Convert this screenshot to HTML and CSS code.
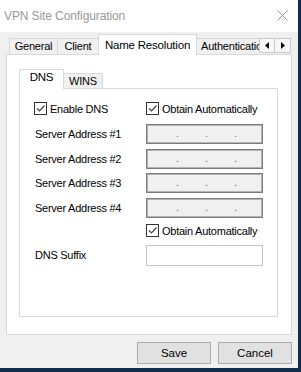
FILE: index.html
```html
<!DOCTYPE html>
<html lang="en">
<head>
    <meta charset="UTF-8">
    <meta name="viewport" content="width=device-width, initial-scale=1.0">
    <title>VPN Site Configuration</title>
    <link rel="stylesheet" href="styles.css">
</head>
<body>
    <div class="window">
        <div class="titlebar">
            <span class="title">VPN Site Configuration</span>
            <svg class="close" width="11" height="11" viewBox="0 0 11 11">
                <path d="M0.5 0.5 L10.5 10.5 M10.5 0.5 L0.5 10.5" stroke="#8f8f8f" stroke-width="1" fill="none"/>
            </svg>
        </div>

        <div class="tabstrip">
            <div class="tabs">
                <div class="tab tab-general">General</div>
                <div class="tab tab-client">Client</div>
                <div class="tab tab-names active">Name Resolution</div>
                <div class="tab tab-auth">Authentication</div>
            </div>
            <div class="tab-scroll">
                <span class="scroll-btn">
                    <svg width="4" height="7" viewBox="0 0 4 7"><path d="M4 0 L0 3.5 L4 7 Z" fill="#000"/></svg>
                </span>
                <span class="scroll-btn">
                    <svg width="4" height="7" viewBox="0 0 4 7"><path d="M0 0 L4 3.5 L0 7 Z" fill="#000"/></svg>
                </span>
            </div>
        </div>

        <div class="panel">
            <div class="subtabs">
                <div class="subtab subtab-dns active">DNS</div>
                <div class="subtab subtab-wins">WINS</div>
            </div>
            <div class="subpanel">
                <div class="form">
                    <div class="row">
                        <label class="check label-col"><span class="box"><svg width="11" height="11" viewBox="0 0 11 11"><path d="M2 5.5 L4.5 8 L9.5 2.5" stroke="#444" stroke-width="1.2" fill="none"/></svg></span>Enable DNS</label>
                        <label class="check"><span class="box"><svg width="11" height="11" viewBox="0 0 11 11"><path d="M2 5.5 L4.5 8 L9.5 2.5" stroke="#444" stroke-width="1.2" fill="none"/></svg></span>Obtain Automatically</label>
                    </div>
                    <div class="row row-ip first-ip">
                        <span class="label-col">Server Address #1</span>
                        <div class="ip"><span>.</span><span>.</span><span>.</span></div>
                    </div>
                    <div class="row row-ip">
                        <span class="label-col">Server Address #2</span>
                        <div class="ip"><span>.</span><span>.</span><span>.</span></div>
                    </div>
                    <div class="row row-ip">
                        <span class="label-col">Server Address #3</span>
                        <div class="ip"><span>.</span><span>.</span><span>.</span></div>
                    </div>
                    <div class="row row-ip">
                        <span class="label-col">Server Address #4</span>
                        <div class="ip"><span>.</span><span>.</span><span>.</span></div>
                    </div>
                    <div class="row row-check2">
                        <span class="label-col"></span>
                        <label class="check"><span class="box"><svg width="11" height="11" viewBox="0 0 11 11"><path d="M2 5.5 L4.5 8 L9.5 2.5" stroke="#444" stroke-width="1.2" fill="none"/></svg></span>Obtain Automatically</label>
                    </div>
                    <div class="row row-suffix">
                        <span class="label-col">DNS Suffix</span>
                        <div class="textbox"></div>
                    </div>
                </div>
            </div>
        </div>

        <div class="buttons">
            <button class="btn">Save</button>
            <button class="btn">Cancel</button>
        </div>
    </div>
</body>
</html>
```

FILE: styles.css
```css
body {
    margin: 0;
    background: #0f2c4c;
    font-family: "Liberation Sans", Arial, sans-serif;
    font-size: 11px;
    color: #000;
    height: 372px;
    overflow: hidden;
}
.window {
    width: 298px;
    height: 368px;
    background: #f0f0f0;
    display: flex;
    flex-direction: column;
}
.titlebar {
    height: 31px;
    background: #fff;
    display: flex;
    align-items: center;
    justify-content: space-between;
    padding: 0 10px 1px 4px;
}
.title {
    font-size: 12px;
    color: #999;
    letter-spacing: -0.1px;
}
.close {
    display: block;
}

/* outer tab strip */
.tabstrip {
    height: 23px;
    margin-bottom: -1px;
    position: relative;
    z-index: 1;
    display: flex;
    align-items: flex-end;
    padding: 0 7px 0 9px;
}
.tabs {
    flex: 1;
    min-width: 0;
    height: 23px;
    display: flex;
    align-items: flex-end;
    overflow: hidden;
}
.tab {
    flex: none;
    box-sizing: border-box;
    height: 16px;
    margin-bottom: 1px;
    margin-left: -1px;
    border: 1px solid #d9d9d9;
    border-bottom: none;
    background: #f0f0f0;
    text-align: center;
    line-height: 13px;
    padding-top: 1px;
    letter-spacing: -0.2px;
    white-space: nowrap;
}
.tab:first-child {
    margin-left: 0;
}
.tab.active {
    height: 21px;
    margin-bottom: 0;
    background: #fff;
    padding-top: 4px;
    font-size: 11.5px;
}
.tab-general { width: 49px; }
.tab-client { width: 42px; }
.tab-names { width: 99px; }
.tab-auth { width: 90px; text-align: left; padding-left: 4px; }
.tab-scroll {
    display: flex;
    margin-bottom: 2px;
}
.scroll-btn {
    box-sizing: border-box;
    width: 16px;
    height: 15px;
    border: 1px solid #c9c9c9;
    background: #f7f7f7;
    display: flex;
    align-items: center;
    justify-content: center;
}
.scroll-btn + .scroll-btn {
    border-left: none;
    width: 16px;
}

/* tab page */
.panel {
    box-sizing: border-box;
    width: 286px;
    height: 281px;
    margin-left: 6px;
    border: 1px solid #d9d9d9;
    background: #fff;
}
.subtabs {
    height: 34px;
    margin-bottom: -1px;
    position: relative;
    z-index: 1;
    display: flex;
    align-items: flex-end;
    padding-left: 12px;
}
.subtab {
    box-sizing: border-box;
    border: 1px solid #d9d9d9;
    border-bottom: none;
    text-align: center;
    letter-spacing: -0.2px;
}
.subtab-dns {
    width: 45px;
    height: 20px;
    background: #fff;
    line-height: 13px;
    padding-top: 1px;
    font-size: 11.5px;
}
.subtab-wins {
    width: 40px;
    height: 15px;
    margin-left: -1px;
    margin-bottom: 1px;
    background: #f0f0f0;
    line-height: 13px;
    padding-top: 1px;
}
.subpanel {
    box-sizing: border-box;
    width: 259px;
    height: 229px;
    margin-left: 12px;
    border: 1px solid #d9d9d9;
    background: #fff;
}

/* form */
.form {
    display: flex;
    flex-direction: column;
    gap: 4.5px;
    padding: 13px 0 0 14px;
    letter-spacing: -0.25px;
}
.row {
    display: flex;
    align-items: center;
    height: 13px;
}
.row-ip {
    height: 20px;
}
.first-ip {
    margin-top: 4.5px;
}
.row-check2 {
    margin-top: 2px;
}
.row-suffix {
    height: 21px;
    margin-top: 3px;
}
.label-col {
    width: 112px;
    flex: none;
    padding-left: 1px;
    box-sizing: border-box;
}
.check {
    display: flex;
    align-items: center;
    gap: 3px;
    white-space: nowrap;
}
.check.label-col {
    padding-left: 0;
}
.box {
    box-sizing: border-box;
    width: 13px;
    height: 13px;
    border: 1px solid #333;
    background: #fff;
    display: flex;
    align-items: center;
    justify-content: center;
}
.box svg {
    display: block;
}
.ip {
    box-sizing: border-box;
    width: 117px;
    height: 20px;
    border: 1px solid #7a7a7a;
    box-shadow: inset 0 0 0 1px #b4b4b4;
    background: #f0f0f0;
    display: flex;
    gap: 26px;
    padding-left: 29px;
    line-height: 17px;
    color: #6d6d6d;
}
.ip span {
    width: 3px;
}
.textbox {
    box-sizing: border-box;
    width: 117px;
    height: 21px;
    border: 1px solid #c4c4c4;
    background: #fff;
}

/* dialog buttons */
.buttons {
    display: flex;
    justify-content: flex-end;
    gap: 7px;
    margin-top: 7px;
    padding-right: 6px;
}
.btn {
    width: 74px;
    height: 22px;
    border: 1px solid #adadad;
    background: #e1e1e1;
    font-family: "Liberation Sans", Arial, sans-serif;
    font-size: 11.5px;
    color: #000;
    padding: 0;
    margin: 0;
}
```
